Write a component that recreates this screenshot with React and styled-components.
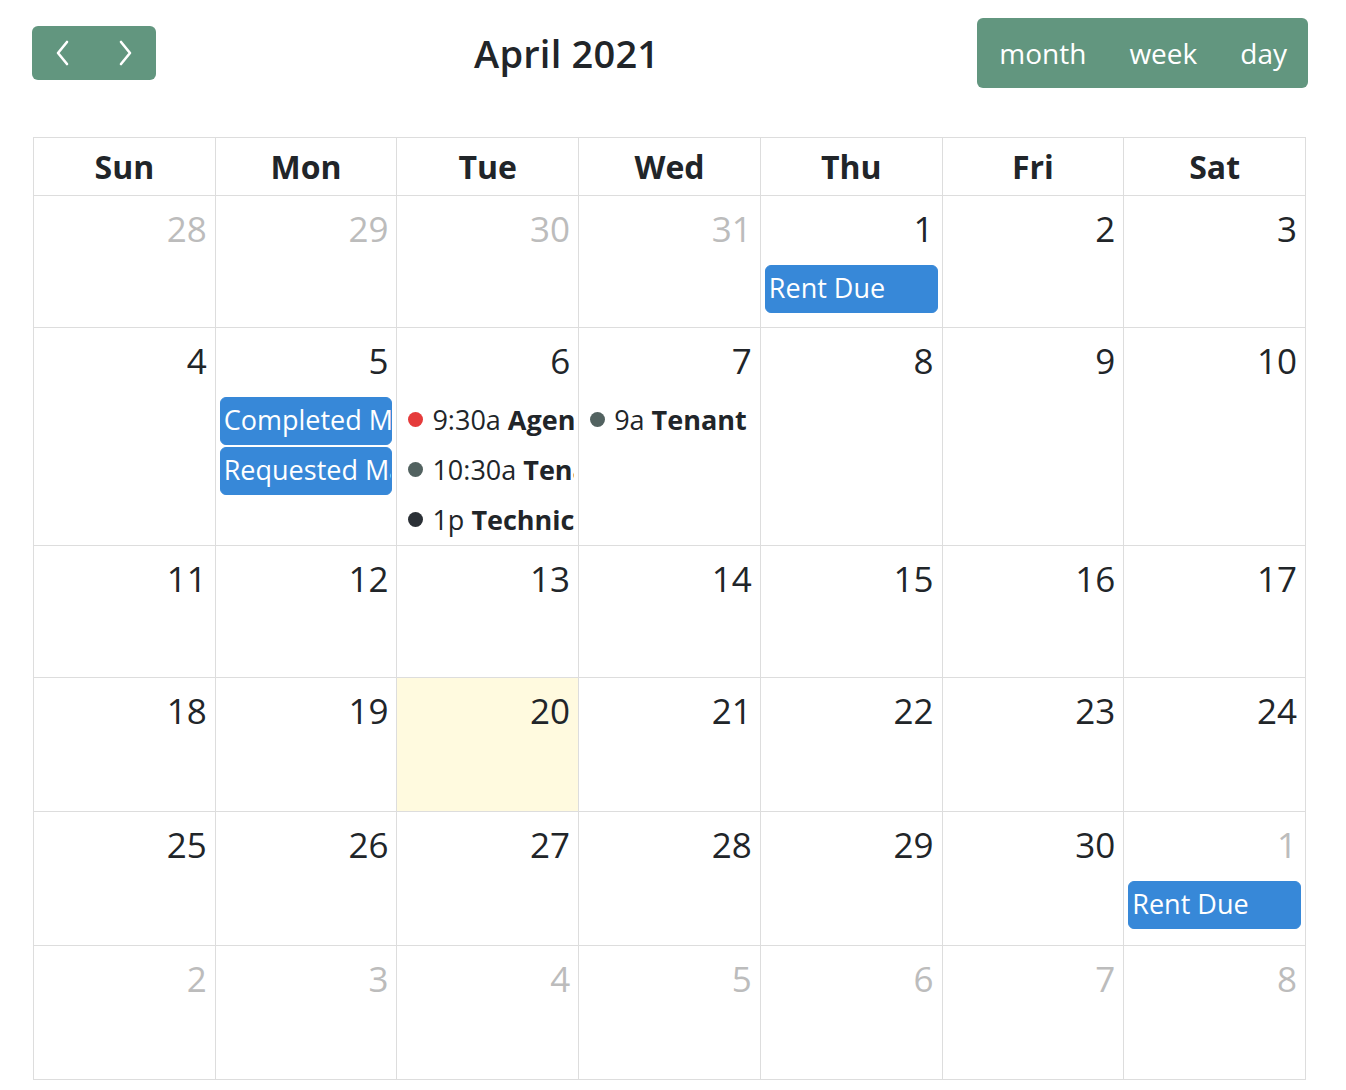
import React from 'react';
import styled, { createGlobalStyle, css } from 'styled-components';

const GlobalStyle = createGlobalStyle`
  body {
    margin: 0;
    background: #fff;
    font-family: "Open Sans", "Liberation Sans", sans-serif;
    color: #212529;
  }
`;

const weeks = [
  [
    { n: 28, other: true }, { n: 29, other: true }, { n: 30, other: true }, { n: 31, other: true },
    { n: 1, events: [{ type: 'block', title: 'Rent Due' }] }, { n: 2 }, { n: 3 }
  ],
  [
    { n: 4 },
    { n: 5, events: [{ type: 'block', title: 'Completed Maintenance' }, { type: 'block', title: 'Requested Maintenance' }] },
    { n: 6, events: [
      { type: 'dot', color: '#e53b3b', time: '9:30a', title: 'Agent Showing' },
      { type: 'dot', color: '#526260', time: '10:30a', title: 'Tenant Meeting' },
      { type: 'dot', color: '#2b3036', time: '1p', title: 'Technician Visit' }
    ] },
    { n: 7, events: [{ type: 'dot', color: '#526260', time: '9a', title: 'Tenant' }] },
    { n: 8 }, { n: 9 }, { n: 10 }
  ],
  [{ n: 11 }, { n: 12 }, { n: 13 }, { n: 14 }, { n: 15 }, { n: 16 }, { n: 17 }],
  [{ n: 18 }, { n: 19 }, { n: 20, today: true }, { n: 21 }, { n: 22 }, { n: 23 }, { n: 24 }],
  [
    { n: 25 }, { n: 26 }, { n: 27 }, { n: 28 }, { n: 29 }, { n: 30 },
    { n: 1, other: true, events: [{ type: 'block', title: 'Rent Due' }] }
  ],
  [
    { n: 2, other: true }, { n: 3, other: true }, { n: 4, other: true }, { n: 5, other: true },
    { n: 6, other: true }, { n: 7, other: true }, { n: 8, other: true }
  ]
];

const dayNames = ['Sun', 'Mon', 'Tue', 'Wed', 'Thu', 'Fri', 'Sat'];
const views = ['month', 'week', 'day'];

const Page = styled.div`
  padding: 18px 38px 0 32px;
`;

const Toolbar = styled.div`
  display: flex;
  align-items: center;
  justify-content: space-between;
  margin-bottom: 49px;
`;

const ButtonGroup = styled.div`
  display: flex;
  background: #62967f;
  border-radius: 6px;
  overflow: hidden;
`;

const NavButton = styled.button`
  width: 62px;
  height: 54px;
  border: 0;
  background: transparent;
  display: flex;
  align-items: center;
  justify-content: center;
  padding: 0;
  cursor: pointer;
`;

const ViewButton = styled.button`
  height: 70px;
  border: 0;
  background: transparent;
  color: #fff;
  font-family: "Open Sans", "Liberation Sans", sans-serif;
  font-size: 28px;
  padding: 0 21px 0 22px;
  cursor: pointer;
`;

const Title = styled.h2`
  margin: 0;
  font-size: 38px;
  font-weight: 600;
  color: #212529;
  letter-spacing: 0.2px;
`;

const Table = styled.div`
  margin-left: 1px;
  margin-right: 2px;
  border-top: 1px solid #ddd;
  border-left: 1px solid #ddd;
`;

const Row = styled.div`
  display: grid;
  grid-template-columns: repeat(7, 1fr);
`;

const HeadCell = styled.div`
  height: 57px;
  border-right: 1px solid #ddd;
  border-bottom: 1px solid #ddd;
  display: flex;
  align-items: center;
  justify-content: center;
  font-size: 32px;
  font-weight: 700;
  color: #212529;
`;

const DayCell = styled.div`
  min-height: ${p => (p.tall ? 134 : 132)}px;
  min-width: 0;
  border-right: 1px solid #ddd;
  border-bottom: 1px solid #ddd;
  padding-top: 6px;
  box-sizing: border-box;
  overflow: hidden;
  ${p => p.today && css`
    background: rgba(255, 220, 40, 0.15);
  `}
`;

const DayNumber = styled.div`
  text-align: right;
  padding-right: 8px;
  font-size: 35px;
  line-height: 54px;
  color: ${p => (p.other ? '#bcbcbc' : '#212529')};
`;

const Events = styled.div`
  margin-top: 9px;
  & > *:last-child {
    margin-bottom: 0;
  }
`;

const BlockEvent = styled.div`
  margin: 0 4px 2px;
  height: 48px;
  box-sizing: border-box;
  background: #3788d8;
  border: 1px solid #3788d8;
  border-radius: 6px;
  color: #fff;
  font-size: 27px;
  line-height: 44px;
  padding-left: 3px;
  white-space: nowrap;
  overflow: hidden;
`;

const DotEvent = styled.div`
  display: flex;
  align-items: center;
  height: 48px;
  box-sizing: border-box;
  margin: 0 4px 2px 0;
  padding: 0 0 3px 11px;
  font-size: 27px;
  white-space: nowrap;
  overflow: hidden;
  color: #212529;
`;

const Dot = styled.span`
  flex: none;
  width: 15px;
  height: 15px;
  border-radius: 50%;
  background: ${p => p.color};
  margin-right: 9px;
`;

const Time = styled.span`
  margin-right: 7px;
`;

const EventTitle = styled.span`
  font-weight: 700;
`;

const Chevron = ({ dir }) => (
  <svg width="16" height="28" viewBox="0 0 16 28" fill="none">
    <polyline
      points={dir === 'left' ? '12,3 3,14 12,25' : '4,3 13,14 4,25'}
      stroke="#fff"
      strokeWidth="2.6"
      strokeLinecap="round"
      strokeLinejoin="round"
    />
  </svg>
);

const Event = ({ ev }) => {
  if (ev.type === 'block') return <BlockEvent>{ev.title}</BlockEvent>;
  return (
    <DotEvent>
      <Dot color={ev.color} />
      <Time>{ev.time}</Time>
      <EventTitle>{ev.title}</EventTitle>
    </DotEvent>
  );
};

export default function App() {
  return (
    <Page>
      <GlobalStyle />
      <Toolbar>
        <ButtonGroup>
          <NavButton aria-label="prev"><Chevron dir="left" /></NavButton>
          <NavButton aria-label="next"><Chevron dir="right" /></NavButton>
        </ButtonGroup>
        <Title>April 2021</Title>
        <ButtonGroup>
          {views.map(v => <ViewButton key={v}>{v}</ViewButton>)}
        </ButtonGroup>
      </Toolbar>
      <Table>
        <Row>
          {dayNames.map(d => <HeadCell key={d}>{d}</HeadCell>)}
        </Row>
        {weeks.map((week, wi) => (
          <Row key={wi}>
            {week.map((day, di) => (
              <DayCell key={di} today={day.today} tall={wi >= 3}>
                <DayNumber other={day.other}>{day.n}</DayNumber>
                {day.events && (
                  <Events>
                    {day.events.map((ev, ei) => <Event key={ei} ev={ev} />)}
                  </Events>
                )}
              </DayCell>
            ))}
          </Row>
        ))}
      </Table>
    </Page>
  );
}
